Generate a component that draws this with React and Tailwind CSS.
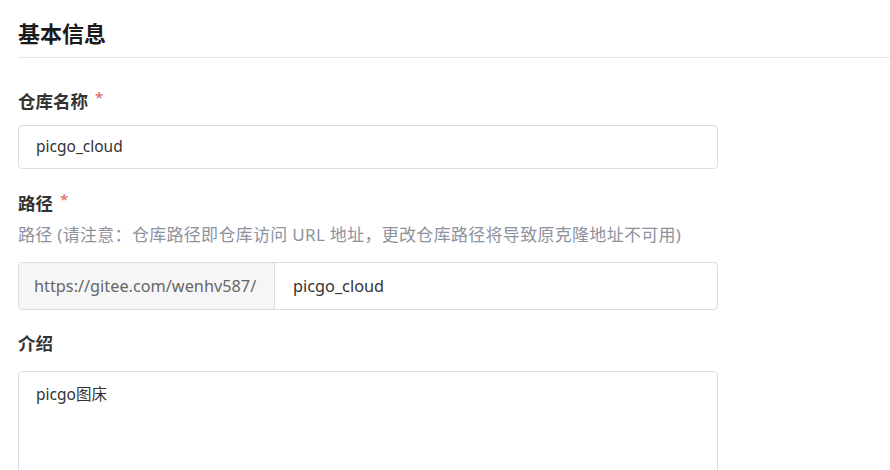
const font = { fontFamily: '"Noto Sans", "Noto Sans CJK SC", sans-serif' }

function Label({ children, required }) {
  return (
    <div className="flex items-start text-[17.5px] leading-[24px] font-bold text-[#333]">
      {children}
      {required && <span className="ml-[7px] text-[#e05c5c] text-[15px] leading-[16px] font-normal">*</span>}
    </div>
  )
}

export default function App() {
  return (
    <div className="w-[890px] h-[470px] overflow-hidden bg-white" style={font}>
      {/* Header */}
      <div className="ml-[18px] pt-[20px] pb-[11px] border-b border-[#e6e6e6]">
        <h1 className="text-[22px] leading-[26px] font-bold text-[#1a1a1a]">基本信息</h1>
      </div>

      <div className="pl-[18px]">
        {/* 仓库名称 */}
        <div className="mt-[31px]">
          <Label required>仓库名称</Label>
          <div className="mt-[12px] w-[700px] h-[44px] flex items-center px-[17px] border border-[#dcdde3] rounded-[4px] text-[15.5px] text-[#333]">
            picgo_cloud
          </div>
        </div>

        {/* 路径 */}
        <div className="mt-[22px]">
          <Label required>路径</Label>
          <p className="mt-[8px] text-[17px] leading-[24px] tracking-[0.3px] text-[#8d929e]">
            路径 (请注意：仓库路径即仓库访问 URL 地址，更改仓库路径将导致原克隆地址不可用)
          </p>
          <div className="mt-[15px] w-[700px] h-[48px] flex border border-[#dcdde3] rounded-[4px] overflow-hidden">
            <div className="w-[256px] flex items-center px-[15px] bg-[#f6f6f7] border-r border-[#dcdde3] text-[16.3px] text-[#666]">
              https://gitee.com/wenhv587/
            </div>
            <div className="flex-1 flex items-center pl-[18px] text-[16.3px] text-[#333]">
              picgo_cloud
            </div>
          </div>
        </div>

        {/* 介绍 */}
        <div className="mt-[21px]">
          <Label>介绍</Label>
          <div className="mt-[16px] w-[700px] h-[140px] px-[17px] pt-[10px] border border-[#dcdde3] rounded-[4px] text-[15.5px] leading-[24px] text-[#333]">
            picgo图床
          </div>
        </div>
      </div>
    </div>
  )
}
